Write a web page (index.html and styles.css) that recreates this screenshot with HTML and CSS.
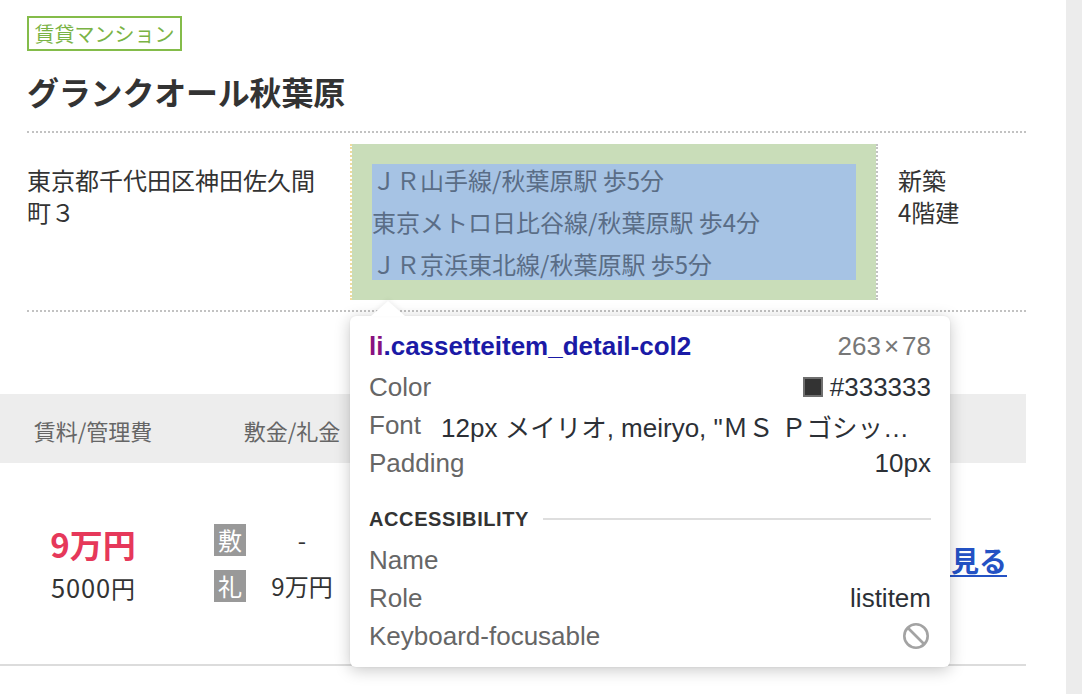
FILE: index.html
```html
<!DOCTYPE html>
<html lang="ja">
<head>
<meta charset="utf-8">
<title>グランクオール秋葉原</title>
<link rel="stylesheet" href="styles.css">
</head>
<body>
<div class="page">
  <div class="main">
    <div class="head">
      <span class="badge">賃貸マンション</span>
      <h1 class="title">グランクオール秋葉原</h1>
      <ul class="detail">
        <li class="col1">東京都千代田区神田佐久間町３</li>
        <li class="col2">
          <div class="col2-inner">
            <div class="st">ＪＲ山手線/秋葉原駅 歩5分</div>
            <div class="st">東京メトロ日比谷線/秋葉原駅 歩4分</div>
            <div class="st">ＪＲ京浜東北線/秋葉原駅 歩5分</div>
          </div>
        </li>
        <li class="col3">
          <div>新築</div>
          <div>4階建</div>
        </li>
      </ul>
    </div>
    <div class="table">
      <div class="thead">
        <div class="th c-price">賃料/管理費</div>
        <div class="th c-dep">敷金/礼金</div>
      </div>
      <div class="trow">
        <div class="td c-price">
          <div class="rent">9万円</div>
          <div class="fee"><span class="num">5000</span>円</div>
        </div>
        <div class="td c-dep">
          <div class="dep-list">
            <div class="dep-row"><span class="dep-badge">敷</span><span class="dep-val">-</span></div>
            <div class="dep-row"><span class="dep-badge">礼</span><span class="dep-val">9万円</span></div>
          </div>
        </div>
        <div class="td c-link"><a class="link" href="#">詳細を見る</a></div>
      </div>
    </div>
  </div>
  <div class="scrollbar"></div>

  <div class="tooltip">
    <div class="tt-row">
      <span class="tt-sel"><span class="tt-tag">li</span>.cassetteitem_detail-col2</span>
      <span class="tt-size">263<span class="tt-x">×</span>78</span>
    </div>
    <div class="tt-row tt-gap">
      <span class="tt-label">Color</span>
      <span class="tt-val"><span class="swatch"></span>#333333</span>
    </div>
    <div class="tt-row">
      <span class="tt-label">Font</span>
      <span class="tt-font">12px <span class="cjk">メイリオ</span>, meiryo, "<span class="cjk">ＭＳ Ｐゴシッ</span>…</span>
    </div>
    <div class="tt-row">
      <span class="tt-label">Padding</span>
      <span class="tt-val">10px</span>
    </div>
    <div class="tt-section">
      <span class="tt-section-title">ACCESSIBILITY</span>
      <span class="tt-section-line"></span>
    </div>
    <div class="tt-row">
      <span class="tt-label">Name</span>
      <span class="tt-val"></span>
    </div>
    <div class="tt-row">
      <span class="tt-label">Role</span>
      <span class="tt-val">listitem</span>
    </div>
    <div class="tt-row">
      <span class="tt-label">Keyboard-focusable</span>
      <span class="tt-val">
        <svg class="no-icon" width="28" height="28" viewBox="0 0 28 28" aria-hidden="true">
          <circle cx="14" cy="14" r="11.7" fill="none" stroke="#a3a3a3" stroke-width="2.6"/>
          <line x1="6" y1="6" x2="22" y2="22" stroke="#a3a3a3" stroke-width="2.6"/>
        </svg>
      </span>
    </div>
  </div>
</div>
</body>
</html>
```

FILE: styles.css
```css
* { box-sizing: border-box; }

html, body {
  margin: 0;
  padding: 0;
  background: #fff;
}

body {
  font-family: "Noto Sans CJK JP", "Noto Sans", sans-serif;
  color: #333;
}

.page {
  position: relative;
  display: flex;
  width: 1082px;
  height: 694px;
  overflow: hidden;
}

.main {
  flex: 1;
  padding-top: 16px;
}

.scrollbar {
  width: 16px;
  flex: none;
  background: #ececec;
}

/* ---------- header ---------- */
.head {
  padding: 0 40px 0 27px;
}

.badge {
  display: block;
  width: fit-content;
  border: 2px solid #84bc4a;
  color: #7ab344;
  font-size: 20px;
  line-height: 31px;
  padding: 0 5.5px;
}

.title {
  margin: 20px 0 0;
  font-size: 32px;
  line-height: 40px;
  font-weight: 700;
  color: #333;
  letter-spacing: -0.2px;
}

.detail {
  list-style: none;
  display: flex;
  margin: 20px 0 0;
  padding: 11px 0 10px;
  border-top: 2px dotted #c2c2c2;
  border-bottom: 2px dotted #c2c2c2;
  font-size: 24px;
  line-height: 32px;
}

.col1 {
  flex: none;
  width: 323px;
  padding: 20px 20px 20px 0;
}

.col2 {
  flex: none;
  width: 526px;
  padding: 20px;
  border-left: 2px dotted #eedb9e;
  background: #c9ddb9;
  background-clip: padding-box;
}

.col2-inner {
  background: #a6c3e4;
  color: #5a6d86;
}

.st + .st {
  margin-top: 10px;
}

.col3 {
  flex: 1;
  padding: 20px;
  border-left: 2px dotted #c2c2c2;
}

/* ---------- table ---------- */
.table {
  margin-top: 82px;
  margin-right: 40px;
}

.thead {
  display: flex;
  background: #ededed;
  height: 69px;
  padding-top: 24px;
  font-size: 22px;
  line-height: 24px;
  color: #666;
}

.c-price {
  flex: none;
  width: 186px;
  text-align: center;
}

.c-dep {
  flex: none;
  width: 212px;
  text-align: center;
}

.trow {
  display: flex;
  height: 203px;
  border-bottom: 2px solid #dcdcdc;
}

.td.c-price {
  padding-top: 61px;
}

.rent {
  font-size: 33px;
  line-height: 40px;
  font-weight: 700;
  color: #e6385a;
}

.fee {
  margin-top: 3px;
  font-size: 24px;
  line-height: 40px;
  color: #333;
}

.num {
  font-size: 25.5px;
  letter-spacing: 0.8px;
}

.td.c-dep {
  padding-top: 61px;
}

.dep-list {
  width: 144px;
  margin-left: 28px;
  display: flex;
  flex-direction: column;
  gap: 14px;
}

.dep-row {
  display: flex;
  height: 32px;
  font-size: 24px;
  line-height: 32px;
}

.dep-badge {
  flex: none;
  width: 32px;
  height: 32px;
  background: #999;
  color: #fff;
  text-align: center;
}

.dep-val {
  flex: 1;
  text-align: center;
  color: #333;
}

.c-link {
  flex: 1;
  text-align: right;
  padding: 77px 19px 0 0;
}

.link {
  font-size: 28px;
  line-height: 40px;
  font-weight: 700;
  color: #2452c4;
  text-decoration: underline;
  text-underline-offset: 3px;
}

/* ---------- devtools tooltip ---------- */
.tooltip {
  position: absolute;
  left: 350px;
  top: 316px;
  width: 600px;
  height: 351px;
  padding: 11px 19px;
  background: #fff;
  border-radius: 6px;
  box-shadow: 0 3px 16px rgba(0, 0, 0, 0.22), 0 0 2px rgba(0, 0, 0, 0.08);
  font-family: "Liberation Sans", Arial, "Noto Sans CJK JP", sans-serif;
  font-size: 26px;
  color: #666;
}

.tooltip::before {
  content: "";
  position: absolute;
  left: 21px;
  top: -15px;
  width: 0;
  height: 0;
  border-left: 17px solid transparent;
  border-right: 17px solid transparent;
  border-bottom: 15px solid #fff;
  filter: drop-shadow(0 -2px 2px rgba(0, 0, 0, 0.06));
}

.tt-row {
  display: flex;
  align-items: center;
  justify-content: space-between;
  height: 38px;
  white-space: nowrap;
}

.tt-gap {
  margin-top: 3px;
}

.tt-sel {
  font-weight: 700;
  color: #1a1aa6;
}

.tt-tag {
  color: #881280;
}

.tt-size {
  color: #777;
}

.tt-x {
  margin: 0 3px;
}

.tt-label {
  color: #666;
}

.tt-val {
  display: flex;
  align-items: center;
  color: #2c3036;
}

.swatch {
  display: inline-block;
  width: 20px;
  height: 20px;
  margin-right: 7px;
  background: #333;
  border: 2px solid #6f6f6f;
}

.tt-font {
  flex: 1;
  min-width: 0;
  margin-left: 20px;
  color: #2c3036;
}

.cjk {
  font-size: 25.5px;
}

.tt-section {
  display: flex;
  align-items: center;
  height: 59px;
  padding: 22px 0 7px;
}

.tt-section-title {
  font-size: 20px;
  line-height: 30px;
  font-weight: 700;
  letter-spacing: 0.6px;
  color: #333;
}

.tt-section-line {
  flex: 1;
  height: 2px;
  margin-left: 14px;
  background: #dedede;
}

.no-icon {
  display: block;
  margin-right: 1px;
}
```
